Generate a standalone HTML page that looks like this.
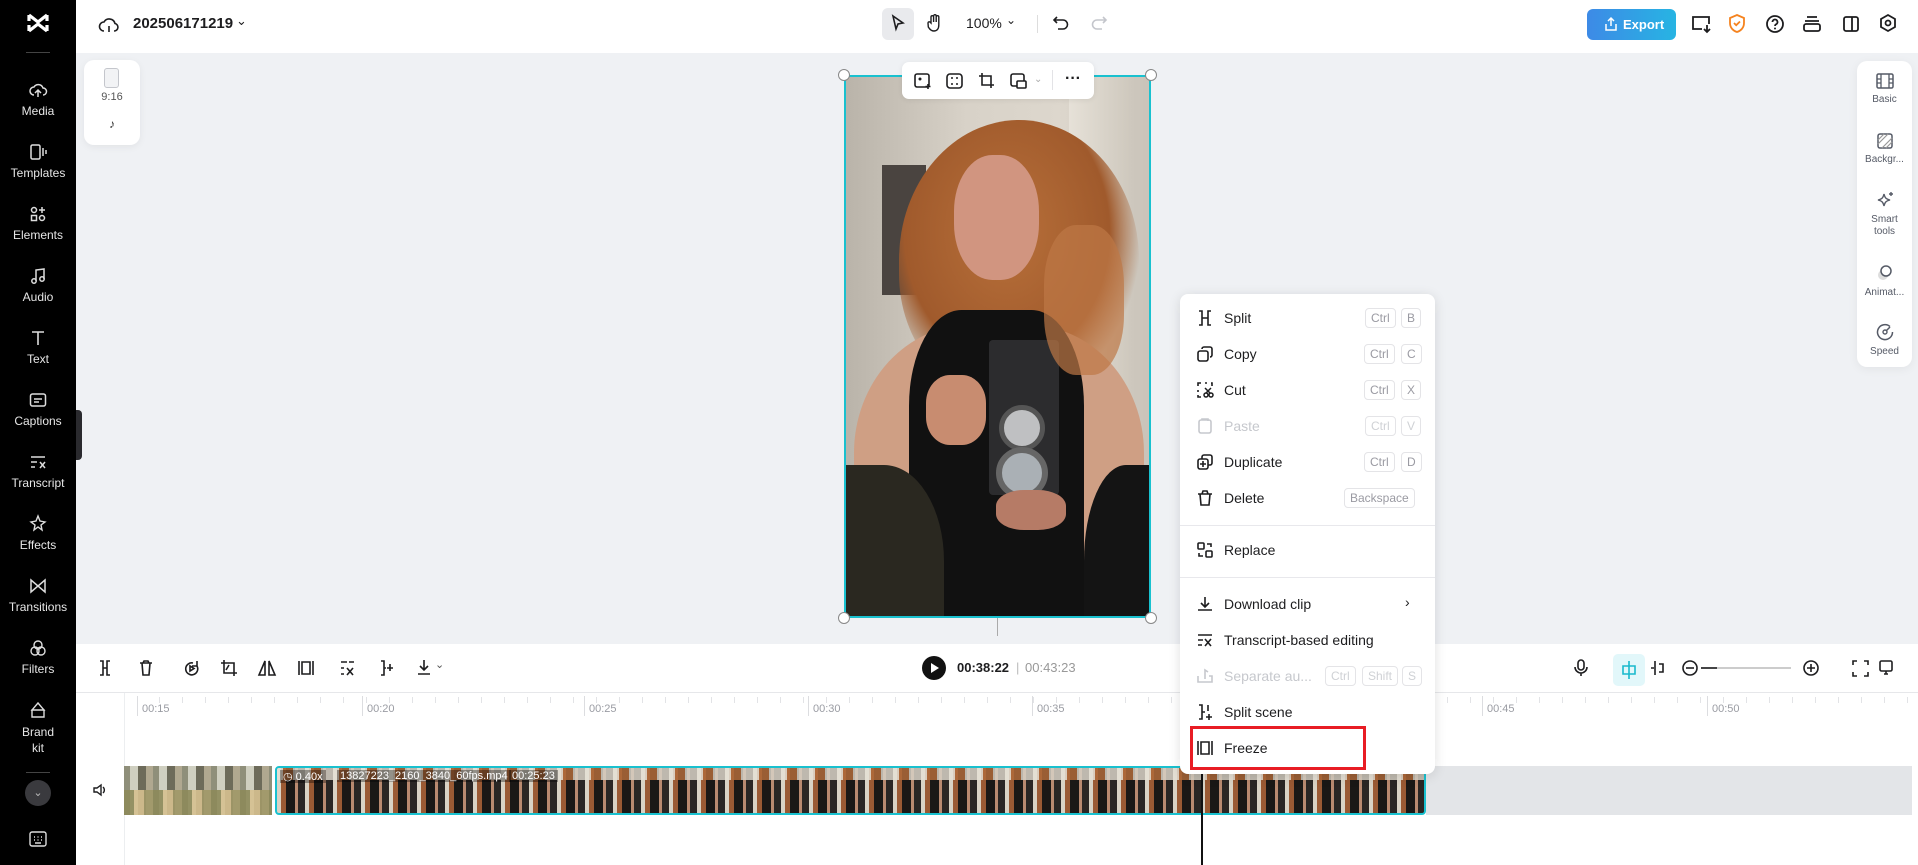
<!DOCTYPE html>
<html><head><meta charset="utf-8"><style>
*{box-sizing:border-box;margin:0;padding:0}
body{width:1918px;height:865px;overflow:hidden;background:#eff1f4;font-family:"Liberation Sans",sans-serif;position:relative;color:#1d1d1f}
.a{position:absolute}
#side{left:0;top:0;width:76px;height:865px;background:#000;color:#e8e8e8}
.si{position:absolute;left:0;width:76px;text-align:center;font-size:12px;color:#e6e6e6}
.si svg{display:block;margin:0 auto 4px}
#top{left:76px;top:0;width:1842px;height:53px;background:#fff}
#menu{left:1180px;top:294px;width:255px;height:480px;background:#fff;border-radius:8px;box-shadow:0 2px 12px rgba(0,0,0,.12)}
.mi{position:absolute;left:0;width:255px;height:34px;font-size:14px;color:#1d1d1f}
.mi span.t{position:absolute;left:44px;top:9px}
.mi svg{position:absolute;left:16px;top:8px}
.k{position:absolute;top:7px;height:20px;border:1px solid #e4e4e7;border-radius:4px;font-size:12px;color:#9a9aa2;padding:2px 5px;line-height:14px}
.dis{color:#c6c8cd}
.sep{position:absolute;left:0;width:255px;height:1px;background:#e8e8ec}
.rp{position:absolute;left:0;width:55px;text-align:center;font-size:10px;color:#555a66}
.rp svg{display:block;margin:0 auto 5px}
.tl{font-size:11px;color:#9a9ca3;position:absolute;top:703px}
.tk{position:absolute;top:696px;width:1px;height:20px;background:#dcdde0}
</style></head><body>
<div id="side" class="a">
<svg class="a" style="left:26px;top:12px" width="24" height="22" viewBox="0 0 24 22"><path d="M3 3 L12 10 L21 3 M3 19 L12 12 L21 19 M3 3v6 M21 3v6 M3 13v6 M21 13v6" stroke="#fff" stroke-width="3.2" fill="none"/></svg>
<div class="a" style="left:26px;top:52px;width:24px;height:1px;background:#444"></div>
<div class="si" style="top:80px"><svg width="20" height="20" viewBox="0 0 20 20"><path d="M6 15a4 4 0 0 1 0-8 5 5 0 0 1 9 1 3.5 3.5 0 0 1 0 7M10 17v-7m-3 3 3-3 3 3" stroke="#ddd" stroke-width="1.5" fill="none"/></svg>Media</div>
<div class="si" style="top:142px"><svg width="20" height="20" viewBox="0 0 20 20"><rect x="3" y="3" width="9" height="14" rx="1.5" stroke="#ddd" stroke-width="1.5" fill="none"/><path d="M15 6v8M18 8v4" stroke="#ddd" stroke-width="1.5"/></svg>Templates</div>
<div class="si" style="top:204px"><svg width="20" height="20" viewBox="0 0 20 20"><circle cx="6" cy="6" r="2.5" stroke="#ddd" stroke-width="1.5" fill="none"/><rect x="3.5" y="11.5" width="5" height="5" stroke="#ddd" stroke-width="1.5" fill="none"/><circle cx="14" cy="14" r="2.5" stroke="#ddd" stroke-width="1.5" fill="none"/><path d="M14 3v6M11 6h6" stroke="#ddd" stroke-width="1.5"/></svg>Elements</div>
<div class="si" style="top:266px"><svg width="20" height="20" viewBox="0 0 20 20"><path d="M8 15V4l8-1v10" stroke="#ddd" stroke-width="1.5" fill="none"/><circle cx="6" cy="15" r="2.2" stroke="#ddd" stroke-width="1.5" fill="none"/><circle cx="14" cy="13" r="2.2" stroke="#ddd" stroke-width="1.5" fill="none"/></svg>Audio</div>
<div class="si" style="top:328px"><svg width="20" height="20" viewBox="0 0 20 20"><path d="M4 4h12M10 4v13" stroke="#ddd" stroke-width="1.6"/></svg>Text</div>
<div class="si" style="top:390px"><svg width="20" height="20" viewBox="0 0 20 20"><rect x="2.5" y="4" width="15" height="12" rx="2" stroke="#ddd" stroke-width="1.5" fill="none"/><path d="M6 9h8M6 12h5" stroke="#ddd" stroke-width="1.5"/></svg>Captions</div>
<div class="si" style="top:452px"><svg width="20" height="20" viewBox="0 0 20 20"><path d="M3 5h14M3 10h6M3 15h4M12 10l5 6M17 10l-5 6" stroke="#ddd" stroke-width="1.5"/></svg>Transcript</div>
<div class="si" style="top:514px"><svg width="20" height="20" viewBox="0 0 20 20"><path d="M10 2l2 5 5 1-4 3 1 5-4-3-4 3 1-5-4-3 5-1z" stroke="#ddd" stroke-width="1.4" fill="none"/></svg>Effects</div>
<div class="si" style="top:576px"><svg width="20" height="20" viewBox="0 0 20 20"><path d="M3 4v12l7-6zM17 4v12l-7-6z" stroke="#ddd" stroke-width="1.5" fill="none"/></svg>Transitions</div>
<div class="si" style="top:638px"><svg width="20" height="20" viewBox="0 0 20 20"><circle cx="10" cy="7" r="4" stroke="#ddd" stroke-width="1.4" fill="none"/><circle cx="7" cy="13" r="4" stroke="#ddd" stroke-width="1.4" fill="none"/><circle cx="13" cy="13" r="4" stroke="#ddd" stroke-width="1.4" fill="none"/></svg>Filters</div>
<div class="si" style="top:700px;line-height:16px"><svg width="20" height="20" viewBox="0 0 20 20"><path d="M10 3l6 7H4zM4 10h12v7H4z" stroke="#ddd" stroke-width="1.4" fill="none"/></svg>Brand<br>kit</div>
<div class="a" style="left:26px;top:772px;width:24px;height:1px;background:#444"></div>
<div class="a" style="left:25px;top:780px;width:26px;height:26px;border-radius:50%;background:#3a3a3e;color:#bbb;font-size:11px;text-align:center;line-height:26px">⌄</div>
<svg class="a" style="left:29px;top:831px" width="18" height="16" viewBox="0 0 18 16"><rect x="1" y="1" width="16" height="14" rx="2" stroke="#ddd" stroke-width="1.4" fill="none"/><path d="M5 6h1M8.5 6h1M12 6h1M5 9h1M8.5 9h1M12 9h1M6 12h6" stroke="#ddd" stroke-width="1.4"/></svg>
<div class="a" style="left:76px;top:410px;width:6px;height:50px;background:#2a2a2e;border-radius:0 4px 4px 0"></div>
</div>

<div id="top" class="a">
<svg class="a" style="left:22px;top:15px" width="22" height="20" viewBox="0 0 22 20"><path d="M6 16a4.5 4.5 0 0 1 0-9 6 6 0 0 1 11 1.5 3.8 3.8 0 0 1-1 7.5M11 17v-6" stroke="#1d1d1f" stroke-width="1.6" fill="none"/></svg>
<div class="a" style="left:57px;top:15px;font-size:15px;font-weight:bold">202506171219</div>
<div class="a" style="left:160px;top:13px;font-size:13px">⌄</div>
<div class="a" style="left:806px;top:8px;width:32px;height:32px;background:#e9eaed;border-radius:6px"></div>
<svg class="a" style="left:814px;top:14px" width="16" height="18" viewBox="0 0 16 18"><path d="M3 2l10 7-5 1-2 5z" stroke="#1d1d1f" stroke-width="1.6" fill="none"/></svg>
<svg class="a" style="left:850px;top:13px" width="18" height="20" viewBox="0 0 18 20"><path d="M5 10V4a1.3 1.3 0 0 1 2.6 0v5V3a1.3 1.3 0 0 1 2.6 0v6V4a1.3 1.3 0 0 1 2.6 0v8c0 4-2 6-5 6-2.5 0-4-1.5-5.5-4L2 10a1.3 1.3 0 0 1 2-1z" stroke="#1d1d1f" stroke-width="1.4" fill="none"/></svg>
<div class="a" style="left:890px;top:15px;font-size:14px">100%</div><div class="a" style="left:930px;top:13px;font-size:12px">⌄</div>
<div class="a" style="left:961px;top:15px;width:1px;height:18px;background:#ddd"></div>
<svg class="a" style="left:976px;top:14px" width="18" height="18" viewBox="0 0 18 18"><path d="M5 3 2 6l3 3M2 6h9a4.5 4.5 0 0 1 0 9H6" stroke="#1d1d1f" stroke-width="1.6" fill="none"/></svg>
<svg class="a" style="left:1014px;top:14px" width="18" height="18" viewBox="0 0 18 18"><path d="M13 3l3 3-3 3M16 6H7a4.5 4.5 0 0 0 0 9h5" stroke="#c4c6cc" stroke-width="1.6" fill="none"/></svg>
<div class="a" style="left:1511px;top:9px;width:89px;height:31px;border-radius:6px;background:linear-gradient(90deg,#3d8ae6,#27b4e3);color:#fff;font-size:13px;font-weight:bold;line-height:31px;padding-left:36px">Export</div>
<svg class="a" style="left:1528px;top:16px" width="14" height="16" viewBox="0 0 14 16"><path d="M7 10V2M4 5l3-3 3 3M2 8v6h10V8" stroke="#fff" stroke-width="1.5" fill="none"/></svg>
<svg class="a" style="left:1614px;top:14px" width="22" height="20" viewBox="0 0 22 20"><path d="M12 15H3V3h16v7M17 11v7m-3-3 3 3 3-3" stroke="#1d1d1f" stroke-width="1.8" fill="none"/></svg>
<svg class="a" style="left:1652px;top:13px" width="18" height="21" viewBox="0 0 18 21"><path d="M9 2 16 5v5c0 5-3.5 8-7 9-3.5-1-7-4-7-9V5z" stroke="#f5831f" stroke-width="1.8" fill="none"/><path d="M6 10l2.2 2.2L12 8.5" stroke="#f5831f" stroke-width="1.8" fill="none"/></svg>
<svg class="a" style="left:1689px;top:14px" width="20" height="20" viewBox="0 0 20 20"><circle cx="10" cy="10" r="8" stroke="#1d1d1f" stroke-width="1.8" fill="none"/><path d="M7.5 8a2.5 2.5 0 1 1 3.5 2.3c-.7.4-1 .9-1 1.7" stroke="#1d1d1f" stroke-width="1.8" fill="none"/><circle cx="10" cy="14.5" r="1" fill="#1d1d1f"/></svg>
<svg class="a" style="left:1726px;top:15px" width="20" height="18" viewBox="0 0 20 18"><path d="M5 2h10M3 6h14" stroke="#1d1d1f" stroke-width="1.8"/><rect x="2" y="9" width="16" height="7" rx="2" stroke="#1d1d1f" stroke-width="1.8" fill="none"/></svg>
<svg class="a" style="left:1766px;top:15px" width="18" height="18" viewBox="0 0 18 18"><rect x="2" y="2" width="14" height="14" rx="2" stroke="#1d1d1f" stroke-width="1.8" fill="none"/><path d="M10 2v14" stroke="#1d1d1f" stroke-width="1.8"/></svg>
<svg class="a" style="left:1802px;top:13px" width="20" height="20" viewBox="0 0 20 20"><path d="M10 2l7 4v8l-7 4-7-4V6z" stroke="#1d1d1f" stroke-width="1.8" fill="none"/><circle cx="10" cy="10" r="2.5" stroke="#1d1d1f" stroke-width="1.8" fill="none"/></svg>
</div>

<div class="a" style="left:84px;top:60px;width:56px;height:85px;background:#fff;border-radius:10px;box-shadow:0 2px 8px rgba(0,0,0,.06)"></div>
<div class="a" style="left:104px;top:68px;width:15px;height:20px;border:1.5px solid #c4c6cc;border-radius:3px;background:#f2f3f5"></div>
<div class="a" style="left:84px;top:91px;width:56px;text-align:center;font-size:11px;color:#555">9:16</div>
<div class="a" style="left:84px;top:117px;width:56px;text-align:center;font-size:12px;color:#333">♪</div>

<div class="a" style="left:844px;top:75px;width:307px;height:543px;overflow:hidden;background:linear-gradient(90deg,#b9b3a9,#d8d2c8 40%,#ddd7cd 70%,#c9c3b9)">
<div class="a" style="left:38px;top:90px;width:44px;height:130px;background:#4a4440"></div>
<div class="a" style="left:225px;top:0;width:60px;height:543px;background:linear-gradient(90deg,#e6e1d8,#cfc9be)"></div>
<div class="a" style="left:55px;top:45px;width:240px;height:280px;border-radius:50% 50% 45% 45%;background:radial-gradient(ellipse at 45% 40%,#b8703a,#a05a2c 55%,rgba(150,80,40,0) 72%)"></div>
<div class="a" style="left:110px;top:80px;width:85px;height:125px;border-radius:45%;background:#d19580"></div>
<div class="a" style="left:10px;top:250px;width:290px;height:320px;border-radius:40% 40% 0 0;background:#cf9f84"></div>
<div class="a" style="left:65px;top:235px;width:175px;height:320px;background:#111;border-radius:30% 30% 0 0"></div>
<div class="a" style="left:0;top:390px;width:100px;height:160px;background:#2a2820;border-radius:0 60% 0 0"></div>
<div class="a" style="left:240px;top:390px;width:70px;height:160px;background:#141414;border-radius:60% 0 0 0"></div>
<div class="a" style="left:82px;top:300px;width:60px;height:70px;background:#c88c70;border-radius:40%"></div>
<div class="a" style="left:145px;top:265px;width:70px;height:155px;background:#2c2c2e;border-radius:4px"></div>
<div class="a" style="left:155px;top:330px;width:46px;height:46px;border-radius:50%;background:#bfc0c2;border:5px solid #555"></div>
<div class="a" style="left:152px;top:372px;width:52px;height:52px;border-radius:50%;background:#aab0b5;border:6px solid #666"></div>
<div class="a" style="left:152px;top:415px;width:70px;height:40px;background:#b67b66;border-radius:40%"></div>
<div class="a" style="left:200px;top:150px;width:80px;height:150px;border-radius:40%;background:rgba(190,120,70,.7)"></div>
</div>
<div class="a" style="left:844px;top:75px;width:307px;height:543px;border:2px solid #19c1cf"></div>
<div class="a" style="left:838px;top:69px;width:12px;height:12px;border-radius:50%;background:#fff;border:1px solid #888"></div>
<div class="a" style="left:1145px;top:69px;width:12px;height:12px;border-radius:50%;background:#fff;border:1px solid #888"></div>
<div class="a" style="left:838px;top:612px;width:12px;height:12px;border-radius:50%;background:#fff;border:1px solid #888"></div>
<div class="a" style="left:1145px;top:612px;width:12px;height:12px;border-radius:50%;background:#fff;border:1px solid #888"></div>
<div class="a" style="left:997px;top:618px;width:1px;height:18px;background:#aaa"></div>
<div class="a" style="left:902px;top:62px;width:192px;height:37px;background:#fff;border-radius:7px;box-shadow:0 1px 6px rgba(0,0,0,.08)"></div>
<svg class="a" style="left:914px;top:73px" width="18" height="16" viewBox="0 0 18 16"><rect x="1" y="1" width="14" height="13" rx="2" stroke="#1d1d1f" stroke-width="1.6" fill="none"/><circle cx="6" cy="6" r="1.5" fill="#1d1d1f"/><path d="M14 11v5M11.5 13.5h5" stroke="#1d1d1f" stroke-width="1.6"/></svg>
<svg class="a" style="left:946px;top:73px" width="17" height="16" viewBox="0 0 17 16"><rect x="1" y="1" width="15" height="14" rx="3" stroke="#1d1d1f" stroke-width="1.6" fill="none"/><path d="M5 5h2M10 5h2M5 11h2M10 11h2" stroke="#1d1d1f" stroke-width="1.6"/></svg>
<svg class="a" style="left:978px;top:72px" width="17" height="17" viewBox="0 0 17 17"><path d="M4 1v12h12M1 4h12v12" stroke="#1d1d1f" stroke-width="1.6" fill="none"/></svg>
<svg class="a" style="left:1010px;top:73px" width="17" height="16" viewBox="0 0 17 16"><rect x="1" y="1" width="13" height="12" rx="2" stroke="#1d1d1f" stroke-width="1.6" fill="none"/><rect x="7" y="8" width="9" height="7" rx="1" stroke="#1d1d1f" stroke-width="1.6" fill="#fff"/></svg>
<div class="a" style="left:1034px;top:74px;font-size:10px;color:#aaa">⌄</div>
<div class="a" style="left:1052px;top:70px;width:1px;height:20px;background:#e3e3e6"></div>
<div class="a" style="left:1065px;top:70px;font-size:16px;font-weight:bold">···</div>

<div class="a" style="left:1857px;top:61px;width:55px;height:306px;background:#fff;border-radius:10px;box-shadow:0 2px 10px rgba(0,0,0,.06)">
<div class="rp" style="top:12px"><svg width="18" height="16" viewBox="0 0 18 16"><rect x="1" y="1" width="16" height="14" rx="1.5" stroke="#555a66" stroke-width="1.5" fill="none"/><path d="M5 1v14M13 1v14M1 6h4M1 10h4M13 6h4M13 10h4" stroke="#555a66" stroke-width="1.3"/></svg>Basic</div>
<div class="rp" style="top:72px"><svg width="16" height="16" viewBox="0 0 16 16"><rect x="1" y="1" width="14" height="14" rx="2" stroke="#555a66" stroke-width="1.5" fill="none"/><path d="M1 11l10-10M5 15 15 5M1 7 7 1M9 15l6-6" stroke="#999" stroke-width="1.2"/></svg>Backgr...</div>
<div class="rp" style="top:130px;line-height:12px"><svg width="18" height="18" viewBox="0 0 18 18"><path d="M8 3c1 4 2 5 6 6-4 1-5 2-6 6-1-4-2-5-6-6 4-1 5-2 6-6zM15 1v4M13 3h4" stroke="#555a66" stroke-width="1.4" fill="none"/></svg>Smart<br>tools</div>
<div class="rp" style="top:203px"><svg width="18" height="18" viewBox="0 0 18 18"><circle cx="7" cy="11" r="5" fill="#ddd"/><circle cx="10" cy="7" r="5" stroke="#555a66" stroke-width="1.5" fill="#fff"/></svg>Animat...</div>
<div class="rp" style="top:262px"><svg width="18" height="18" viewBox="0 0 18 18"><path d="M14 3.5A7.5 7.5 0 1 0 16.5 9" stroke="#555a66" stroke-width="1.5" fill="none"/><circle cx="9" cy="9" r="2" stroke="#555a66" stroke-width="1.4" fill="none"/><path d="M10.5 7.5 14 4" stroke="#555a66" stroke-width="1.5"/></svg>Speed</div>
</div>

<div class="a" style="left:76px;top:644px;width:1842px;height:221px;background:#fff"></div>
<div class="a" style="left:76px;top:692px;width:1842px;height:1px;background:#e6e7ea"></div>
<div class="a" style="left:124px;top:693px;width:1px;height:172px;background:#eceef0"></div>
<svg class="a" style="left:98px;top:658px" width="420" height="20" viewBox="0 0 420 20">
<g stroke="#1d1d1f" stroke-width="1.6" fill="none">
<path d="M2 3h3v14H2M12 3H9v14h3M5 10h4"/>
<path d="M42 5h12M45 5l1-2h4l1 2M44 5l1 12h6l1-12"/>
<path d="M95 5a6 6 0 1 0 4 3M99 3v5h-5M92 8v5l4-2.5z"/>
<path d="M126 2v13h13M123 5h13v13M131 7l-3 5"/>
<path d="M167 3l-6 14h6zM171 3l6 14h-6z"/>
<path d="M201 3v14M215 3v14M204 4h8v12h-8z"/>
<path d="M243 4h6M243 10h3M243 16h3M249 10l6 7M255 10l-6 7M251 4h5"/>
<path d="M283 3h3v14h-3M286 10h2M292 6v7M289 10h6"/>
<path d="M326 2v10m-4-4 4 4 4-4M320 16h12"/>
</g></svg>
<div class="a" style="left:435px;top:658px;font-size:11px;color:#555">⌄</div>
<div class="a" style="left:922px;top:656px;width:24px;height:24px;border-radius:50%;background:#111"></div>
<div class="a" style="left:931px;top:663px;width:0;height:0;border-left:8px solid #fff;border-top:5px solid transparent;border-bottom:5px solid transparent"></div>
<div class="a" style="left:957px;top:660px;font-size:13px;font-weight:bold">00:38:22</div>
<div class="a" style="left:1016px;top:660px;font-size:13px;color:#bbb">|</div>
<div class="a" style="left:1025px;top:660px;font-size:13px;color:#999">00:43:23</div>
<div class="a" style="left:1613px;top:654px;width:32px;height:32px;background:#e2f7fa;border-radius:5px"></div>
<svg class="a" style="left:1573px;top:658px" width="320" height="20" viewBox="0 0 320 20"><g stroke="#1d1d1f" stroke-width="1.6" fill="none">
<rect x="5" y="2" width="6" height="10" rx="3"/><path d="M2 9a6 6 0 0 0 12 0M8 15v3"/>
<path d="M81 10h-3M82 3v14M86 6h4v8h-4"/>
<circle cx="117" cy="10" r="7"/><path d="M113 10h8"/>
<path d="M128 10h90" stroke="#bbb"/><path d="M128 10h16" stroke="#1d1d1f"/>
<circle cx="238" cy="10" r="7"/><path d="M234 10h8M238 6v8"/>
<path d="M280 7V3h4M291 3h4v4M295 14v4h-4M284 18h-4v-4"/>
<rect x="307" y="3" width="12" height="10" rx="1.5"/><path d="M311 16h4M313 13v3"/>
</g></svg>
<svg class="a" style="left:1619px;top:660px" width="20" height="20" viewBox="0 0 20 20"><path d="M10 1v18M4 6h12v8H4z" stroke="#19b9cc" stroke-width="1.6" fill="none"/></svg>
<div class="tl" style="left:142px">00:15</div><div class="tl" style="left:367px">00:20</div><div class="tl" style="left:589px">00:25</div><div class="tl" style="left:813px">00:30</div><div class="tl" style="left:1037px">00:35</div><div class="tl" style="left:1487px">00:45</div><div class="tl" style="left:1712px">00:50</div>
<div class="tk" style="left:137px"></div><div class="tk" style="left:362px"></div><div class="tk" style="left:584px"></div><div class="tk" style="left:808px"></div><div class="tk" style="left:1032px"></div><div class="tk" style="left:1482px"></div><div class="tk" style="left:1707px"></div>
<div class="a" style="left:137px;top:697px;width:1781px;height:6px;background:repeating-linear-gradient(90deg,transparent 0 22px,#e2e3e6 22px 23px)"></div>
<svg class="a" style="left:92px;top:782px" width="16" height="16" viewBox="0 0 16 16"><path d="M2 6h3l4-3v10l-4-3H2z" stroke="#1d1d1f" stroke-width="1.4" fill="none"/><path d="M11 5a4 4 0 0 1 0 6" stroke="#1d1d1f" stroke-width="1.4" fill="none"/></svg>
<div class="a" style="left:124px;top:766px;width:148px;height:49px;background:repeating-linear-gradient(90deg,#8f8f7a 0 6px,#cfcfc0 6px 14px,#6d6b5a 14px 22px,#b0a890 22px 29px);"></div>
<div class="a" style="left:124px;top:790px;width:148px;height:25px;background:repeating-linear-gradient(90deg,#8d8a5a 0 10px,#d6c090 10px 20px,#a19868 20px 29px);opacity:.9"></div>
<div class="a" style="left:1426px;top:766px;width:486px;height:49px;background:#e3e5e8"></div>
<div class="a" style="left:275px;top:766px;width:1151px;height:49px;border:2px solid #19c1cf;border-radius:4px;overflow:hidden;background:repeating-linear-gradient(90deg,#d9d2c4 0 4px,#9a5a34 4px 9px,#1a1816 9px 18px,#b98a70 18px 21px,#2a2624 21px 28px)">
<div class="a" style="left:0;top:0;width:1151px;height:12px;background:repeating-linear-gradient(90deg,#e6e1d6 0 6px,#b06a3a 6px 16px,#d8d2c6 16px 28px);opacity:.85"></div>
<div class="a" style="left:3px;top:2px;font-size:11px;color:#fff;background:rgba(0,0,0,.35);padding:0 3px">◷ 0.40x</div>
<div class="a" style="left:60px;top:2px;font-size:11px;color:#fff;background:rgba(0,0,0,.35);padding:0 3px">13827223_2160_3840_60fps.mp4</div>
<div class="a" style="left:232px;top:2px;font-size:11px;color:#fff;background:rgba(0,0,0,.35);padding:0 3px">00:25:23</div>
</div>
<div class="a" style="left:1201px;top:748px;width:2px;height:117px;background:#111"></div>

<div id="menu" class="a">
<div class="mi" style="top:7px"><svg width="18" height="18" viewBox="0 0 18 18"><path d="M3 2h3v14H3M15 2h-3v14h3M6 9h6" stroke="#1d1d1f" stroke-width="1.6" fill="none"/></svg><span class="t">Split</span><span class="k" style="left:185px">Ctrl</span><span class="k" style="left:221px">B</span></div>
<div class="mi" style="top:43px"><svg width="18" height="18" viewBox="0 0 18 18"><rect x="2" y="6" width="10" height="10" rx="2" stroke="#1d1d1f" stroke-width="1.6" fill="none"/><path d="M6 4a2 2 0 0 1 2-2h6a2 2 0 0 1 2 2v6a2 2 0 0 1-2 2" stroke="#1d1d1f" stroke-width="1.6" fill="none"/></svg><span class="t">Copy</span><span class="k" style="left:184px">Ctrl</span><span class="k" style="left:221px">C</span></div>
<div class="mi" style="top:79px"><svg width="18" height="18" viewBox="0 0 18 18"><path d="M2 5V2h3M9 2h2M15 2h1v3M2 9v2M2 14v2h3" stroke="#1d1d1f" stroke-width="1.6" fill="none"/><circle cx="10" cy="14" r="2" stroke="#1d1d1f" stroke-width="1.5" fill="none"/><circle cx="15" cy="14" r="2" stroke="#1d1d1f" stroke-width="1.5" fill="none"/><path d="M9 7l5 5M15 7l-5 5" stroke="#1d1d1f" stroke-width="1.5"/></svg><span class="t">Cut</span><span class="k" style="left:184px">Ctrl</span><span class="k" style="left:221px">X</span></div>
<div class="mi dis" style="top:115px"><svg width="18" height="18" viewBox="0 0 18 18"><rect x="3" y="3" width="12" height="13" rx="2" stroke="#c6c8cd" stroke-width="1.6" fill="none"/><path d="M6 3V2h6v2" stroke="#c6c8cd" stroke-width="1.6" fill="none"/></svg><span class="t">Paste</span><span class="k dis" style="left:185px;color:#cfd1d5">Ctrl</span><span class="k" style="left:221px;color:#cfd1d5">V</span></div>
<div class="mi" style="top:151px"><svg width="18" height="18" viewBox="0 0 18 18"><rect x="2" y="6" width="10" height="10" rx="2" stroke="#1d1d1f" stroke-width="1.6" fill="none"/><path d="M6 6V4a2 2 0 0 1 2-2h6a2 2 0 0 1 2 2v6a2 2 0 0 1-2 2h-2M7 8v6M4 11h6" stroke="#1d1d1f" stroke-width="1.6" fill="none"/></svg><span class="t">Duplicate</span><span class="k" style="left:184px">Ctrl</span><span class="k" style="left:221px">D</span></div>
<div class="mi" style="top:187px"><svg width="18" height="18" viewBox="0 0 18 18"><path d="M2 5h14M6 5l1-3h4l1 3M4 5l1 11h8l1-11" stroke="#1d1d1f" stroke-width="1.6" fill="none"/></svg><span class="t">Delete</span><span class="k" style="left:164px">Backspace</span></div>
<div class="sep" style="top:231px"></div>
<div class="mi" style="top:239px"><svg width="18" height="18" viewBox="0 0 18 18"><rect x="2" y="2" width="6" height="6" rx="1" stroke="#1d1d1f" stroke-width="1.6" fill="none"/><rect x="10" y="10" width="6" height="6" rx="1" stroke="#1d1d1f" stroke-width="1.6" fill="none"/><path d="M11 3h4v3M7 15H3v-3" stroke="#1d1d1f" stroke-width="1.6" fill="none"/></svg><span class="t">Replace</span></div>
<div class="sep" style="top:283px"></div>
<div class="mi" style="top:293px"><svg width="18" height="18" viewBox="0 0 18 18"><path d="M9 2v10M5 8l4 4 4-4M2 15h14" stroke="#1d1d1f" stroke-width="1.6" fill="none"/></svg><span class="t">Download clip</span><span class="a" style="left:225px;top:7px;font-size:14px">›</span></div>
<div class="mi" style="top:329px"><svg width="18" height="18" viewBox="0 0 18 18"><path d="M2 4h14M2 9h5M2 14h4M9 8l6 7M15 8l-6 7" stroke="#1d1d1f" stroke-width="1.6" fill="none"/></svg><span class="t">Transcript-based editing</span></div>
<div class="mi dis" style="top:365px"><svg width="18" height="18" viewBox="0 0 18 18"><path d="M2 9v6h14V9h-3M9 12V3l3 2" stroke="#c6c8cd" stroke-width="1.6" fill="none"/></svg><span class="t">Separate au...</span><span class="k" style="left:145px;color:#cfd1d5">Ctrl</span><span class="k" style="left:182px;color:#cfd1d5">Shift</span><span class="k" style="left:222px;color:#cfd1d5">S</span></div>
<div class="mi" style="top:401px"><svg width="18" height="18" viewBox="0 0 18 18"><path d="M3 2h3v14H3M6 9h3M12 2v6M13 11v6M10 14h6" stroke="#1d1d1f" stroke-width="1.6" fill="none"/></svg><span class="t">Split scene</span></div>
<div class="mi" style="top:437px"><svg width="18" height="18" viewBox="0 0 18 18"><path d="M2 2v14M16 2v14M5 3h8v12H5z" stroke="#1d1d1f" stroke-width="1.6" fill="none"/></svg><span class="t">Freeze</span></div>
</div>
<div class="a" style="left:1190px;top:726px;width:176px;height:44px;border:3px solid #e81c24"></div>
</body></html>
